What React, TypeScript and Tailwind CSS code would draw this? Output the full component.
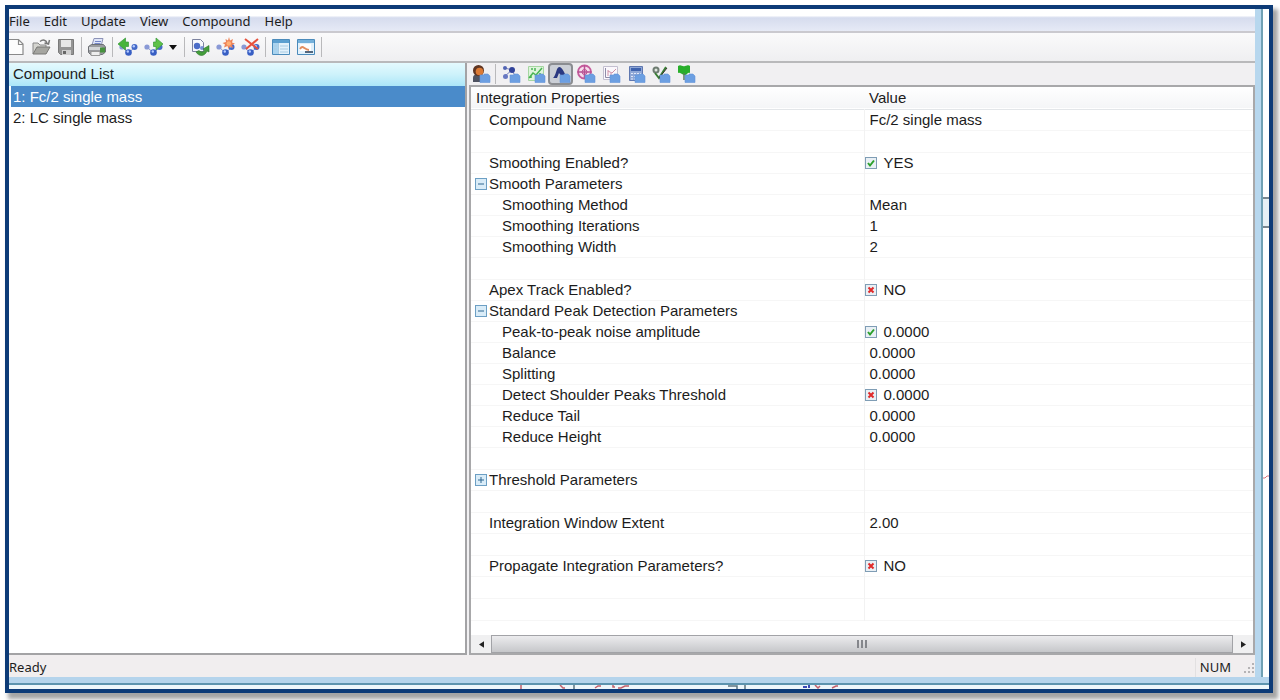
import React, { useState } from "react";

type Row = {
  id: string;
  label?: string;
  value?: string;
  level?: 1 | 2;
  check?: boolean;
  yesNo?: boolean;
  group?: string;
  parent?: string;
};

const MENUS = ["File", "Edit", "Update", "View", "Compound", "Help"];

const COMPOUNDS = ["1: Fc/2 single mass", "2: LC single mass"];

const ROWS: Row[] = [
  { id: "name", label: "Compound Name", value: "Fc/2 single mass", level: 1 },
  { id: "gap1" },
  { id: "smoothing", label: "Smoothing Enabled?", level: 1, check: true, yesNo: true },
  { id: "smooth", label: "Smooth Parameters", group: "smooth" },
  { id: "method", label: "Smoothing Method", value: "Mean", level: 2, parent: "smooth" },
  { id: "iterations", label: "Smoothing Iterations", value: "1", level: 2, parent: "smooth" },
  { id: "width", label: "Smoothing Width", value: "2", level: 2, parent: "smooth" },
  { id: "gap2" },
  { id: "apex", label: "Apex Track Enabled?", level: 1, check: false, yesNo: true },
  { id: "peak", label: "Standard Peak Detection Parameters", group: "peak" },
  { id: "noise", label: "Peak-to-peak noise amplitude", value: "0.0000", level: 2, check: true, parent: "peak" },
  { id: "balance", label: "Balance", value: "0.0000", level: 2, parent: "peak" },
  { id: "splitting", label: "Splitting", value: "0.0000", level: 2, parent: "peak" },
  { id: "shoulder", label: "Detect Shoulder Peaks Threshold", value: "0.0000", level: 2, check: false, parent: "peak" },
  { id: "tail", label: "Reduce Tail", value: "0.0000", level: 2, parent: "peak" },
  { id: "height", label: "Reduce Height", value: "0.0000", level: 2, parent: "peak" },
  { id: "gap3" },
  { id: "threshold", label: "Threshold Parameters", group: "threshold" },
  { id: "gap4" },
  { id: "extent", label: "Integration Window Extent", value: "2.00", level: 1 },
  { id: "gap5" },
  { id: "propagate", label: "Propagate Integration Parameters?", level: 1, check: false, yesNo: true },
  { id: "gap6" },
  { id: "gap7" },
];

function Svg({ children }: { children: React.ReactNode }) {
  return (
    <svg viewBox="0 0 20 20" className="h-5 w-5 shrink-0" fill="none" aria-hidden="true">
      {children}
    </svg>
  );
}

/* ---------- main toolbar icons ---------- */

function NewIcon() {
  return (
    <svg viewBox="0 0 16 20" className="h-5 w-4 shrink-0" fill="none" aria-hidden="true">
      <path d="M0 3h9l5 5v9H0" fill="#fdfdfd" />
      <path d="M0 2.5h9.500l4.500 4.500v10.500H0M9.500 2.500v5h4.500" stroke="#8a8a8a" strokeWidth="1.200" />
    </svg>
  );
}

function OpenIcon() {
  return (
    <Svg>
      <path d="M2 17V6h5l2 2h6v3" fill="#d5d5d0" stroke="#888" />
      <path d="M2 17l4-7h13l-4 7z" fill="#a5a5a0" stroke="#777774" />
      <path d="M9 4.500c3-2.500 6-1.500 7 1.500M18.500 3L17.500 7l-4-1" stroke="#777" strokeWidth="1.500" />
    </Svg>
  );
}

function SaveIcon() {
  return (
    <Svg>
      <path d="M2.500 2.500h15v15H4.500l-2-2z" fill="#949494" stroke="#7a7a7a" />
      <path d="M5 3h10v7H5z" fill="#e6e6e6" />
      <path d="M6 13h9v5H6z" fill="#cfcfcf" />
      <path d="M7 14h3v3H7z" fill="#666" />
    </Svg>
  );
}

function PrintIcon() {
  return (
    <Svg>
      <path d="M7 1.500h9l-2 8H4.500z" fill="#dfe5f8" stroke="#8d93b8" />
      <path d="M8 4.500h6M7.500 6.500h6" stroke="#7486c8" />
      <path d="M1.500 9.500l3-2h12l2 2.500v5l-3 2.500h-12l-2-2z" fill="#9a9ca0" stroke="#6d7075" />
      <path d="M2 10h12.500v3H2z" fill="#d3d5d8" />
      <path d="M4 14.500h9v4H4z" fill="#eee" stroke="#999" />
      <path d="M13 10.500h5v5h-5z" fill="#47923e" />
    </Svg>
  );
}

function Balls() {
  return (
    <>
      <path d="M4 10l6.500 6M10.500 16L17 10" stroke="#8795c8" />
      <circle cx="4" cy="10" r="2.600" fill="#8999d6" />
      <circle cx="10.500" cy="15.500" r="3.300" fill="#385fc4" />
      <circle cx="16.500" cy="10" r="3" fill="#4469c8" />
      <circle cx="9.800" cy="14.500" r="1.200" fill="#b5cbff" />
      <circle cx="15.800" cy="9.200" r="1.200" fill="#b5cbff" />
    </>
  );
}

function PreviousIcon() {
  return (
    <Svg>
      <Balls />
      <path d="M0 7l7.500-6v4h3v4.500h-3V13z" fill="#47b43c" stroke="#36993a" strokeWidth=".7" />
    </Svg>
  );
}

function NextIcon() {
  return (
    <Svg>
      <Balls />
      <path d="M20 7l-7-6v4h-2.500v4.500H13V13z" fill="#5fc148" stroke="#36993a" strokeWidth=".7" />
    </Svg>
  );
}

function RefreshIcon() {
  return (
    <Svg>
      <path d="M2.500 2.500h8l3 3v9h-11z" fill="#f7f8fd" stroke="#7d83a0" />
      <circle cx="7" cy="9" r="3.200" fill="#4b6cc8" />
      <circle cx="12" cy="11" r="2" fill="#7790d6" />
      <path d="M6 15c3 5 9 4.500 11-1l2 1V8.500l-6 3.500 2 1c-2 2.500-4 2.500-6 .5z" fill="#449e3b" stroke="#2a7528" strokeWidth=".6" />
    </Svg>
  );
}

function AddIcon() {
  return (
    <Svg>
      <Balls />
      <path d="M14 0l1 3.500L18 2l-1 3.500 3 1-3 1.500 1 3-3-1.500-1.500 2.500-1-3L9 10.500l1-3L7.500 6 11 5l-.5-3 2.500 1.500z" fill="#ee8458" />
      <circle cx="13.800" cy="6.500" r="2.300" fill="#ffb176" />
    </Svg>
  );
}

function DeleteIcon() {
  return (
    <Svg>
      <Balls />
      <path d="M5 2l13 10M18 2L6 12" stroke="#e6513c" strokeWidth="2" />
    </Svg>
  );
}

function WindowIcon() {
  return (
    <Svg>
      <path d="M1.500 2.500h17v15h-17z" fill="#e2f1fb" stroke="#4b8bbb" />
      <path d="M2 3h16v3H2z" fill="#5b9fd0" />
      <path d="M2 6h5v11H2z" fill="#a9d3ef" />
      <path d="M7.500 6v11M3 9h3M3 12h3M9 9h8M9 12h8M9 15h8" stroke="#a9cbe2" />
    </Svg>
  );
}

function ChartWindowIcon() {
  return (
    <Svg>
      <path d="M1.500 2.500h17v15h-17z" fill="#e2f1fb" stroke="#4b8bbb" />
      <path d="M2 3h16v3H2z" fill="#75b1db" />
      <path d="M4 7h11v7H4z" fill="#fff" />
      <path d="M4 12c3-5 4 1 9 1" stroke="#e38e60" strokeWidth="1.800" />
      <path d="M9 14h8v2H9z" fill="#53677d" />
    </Svg>
  );
}

/* ---------- property page icons, each with a blue folder in the corner ---------- */

function Folder() {
  return <path d="M9 11h4v-1h4l2 2v6.500H9z" fill="#6c9fe2" stroke="#6594d8" strokeWidth=".6" />;
}

function UserPage() {
  return (
    <Svg>
      <path d="M2 18v-4c0-3 2-4 6-4s6 2 6 5v3z" fill="#4f5361" />
      <circle cx="7.500" cy="6.500" r="5.500" fill="#5f3522" />
      <circle cx="8.500" cy="7.500" r="3.800" fill="#dc7a35" />
      <Folder />
    </Svg>
  );
}

function MoleculePage() {
  return (
    <Svg>
      <path d="M4 4l7 2-7 6M11 6l3 6" stroke="#7782bb" />
      <circle cx="4" cy="4" r="2" fill="#5265b4" />
      <circle cx="11" cy="6" r="3" fill="#31439a" />
      <circle cx="4.500" cy="12.500" r="2.500" fill="#6878c2" />
      <Folder />
    </Svg>
  );
}

function SpectrumPage() {
  return (
    <Svg>
      <path d="M2.500 2.500h15v14h-15z" fill="#dff4dc" stroke="#a5d6a1" />
      <path d="M3 14l4-5 3 2 6-7M5 5h2M9 4v3M13 10h2M5 11v3" stroke="#49b454" strokeWidth="1.500" />
      <Folder />
    </Svg>
  );
}

function PeakPage() {
  return (
    <Svg>
      <path d="M2 14c3-2 3-10 6-11 4 0 5 7 9 11l-6-1-3-4-2 5z" fill="#2b3982" />
      <Folder />
    </Svg>
  );
}

function TargetPage() {
  return (
    <Svg>
      <circle cx="8.500" cy="8" r="6.500" fill="#f7dcec" stroke="#c65b9c" strokeWidth="1.800" />
      <circle cx="8.500" cy="8" r="2.500" stroke="#bd4e91" />
      <path d="M8.500 1v14M1.500 8h14" stroke="#b75193" strokeWidth="1.500" />
      <Folder />
    </Svg>
  );
}

function CurvePage() {
  return (
    <Svg>
      <path d="M2.500 2.500h14v13h-14z" fill="#faf7fc" stroke="#c3bfd0" />
      <path d="M4.500 4v9.500H15" stroke="#8f8ba8" />
      <path d="M7 12V6M10 12V9M7 7l4 2 4-4" stroke="#cf91a7" />
      <Folder />
    </Svg>
  );
}

function CalculatorPage() {
  return (
    <Svg>
      <path d="M3.500 2.500h13v14h-13z" fill="#8fa7d6" stroke="#5f77b0" />
      <path d="M5 4h10v3H5z" fill="#3f63ae" />
      <path d="M5 9.500h10M5 12.500h10M5 15h10" stroke="#e0e8fa" strokeDasharray="2 1" />
      <Folder />
    </Svg>
  );
}

function MethodPage() {
  return (
    <Svg>
      <circle cx="5" cy="6" r="3.500" fill="#6f7c72" />
      <circle cx="5" cy="6" r="1.500" fill="#dfe8e0" />
      <path d="M4 9l4 5L15 3" stroke="#397e35" strokeWidth="2" />
      <path d="M8 14l8-10" stroke="#332f26" />
      <Folder />
    </Svg>
  );
}

function FlagPage() {
  return (
    <Svg>
      <path d="M2 2c3-2 4 1 7 0s4-1 5 0v7c-3-1-3 3-6 2s-4-3-6-2z" fill="#28ae2b" />
      <path d="M8 9v7" stroke="#5b7b59" strokeWidth="1.500" />
      <Folder />
    </Svg>
  );
}

function Separator() {
  return (
    <div className="flex w-[6px] shrink-0 justify-center">
      <div className="h-5 w-px bg-[#b9b9bb]" />
    </div>
  );
}

function ToolButton({ label, active, children }: { label: string; active?: boolean; children: React.ReactNode }) {
  return (
    <button
      type="button"
      aria-label={label}
      aria-pressed={active}
      className={
        active
          ? "flex h-[22px] w-[25px] shrink-0 items-center justify-center rounded-sm border-2 border-[#8b8d91] bg-[#cbcfd6]"
          : "flex h-[22px] w-[25px] shrink-0 items-center justify-center"
      }
    >
      {children}
    </button>
  );
}

function CheckMark({ checked, label, onChange }: { checked: boolean; label: string; onChange: () => void }) {
  return (
    <span className="grid h-3 w-3 shrink-0">
      <input
        type="checkbox"
        aria-label={label}
        checked={checked}
        onChange={onChange}
        className="col-start-1 row-start-1 h-3 w-3 appearance-none border border-[#7f9db5] bg-[#e9f0f5]"
      />
      <svg viewBox="0 0 12 12" className="pointer-events-none col-start-1 row-start-1 h-3 w-3" fill="none">
        {checked ? (
          <path d="M3 6l2 2.500L9 3.500" stroke="#2ba02b" strokeWidth="2" />
        ) : (
          <path d="M3.500 3.500l5 5M8.500 3.500l-5 5" stroke="#e02a2a" strokeWidth="2" />
        )}
      </svg>
    </span>
  );
}

function Toggle({ open, label, onClick }: { open: boolean; label: string; onClick: () => void }) {
  return (
    <button
      type="button"
      aria-label={label}
      aria-expanded={open}
      onClick={onClick}
      className="h-3 w-3 shrink-0 border border-[#6c9fc4] bg-[#d9ecf8]"
    >
      <svg viewBox="0 0 10 10" className="h-[10px] w-[10px]" stroke="#2f6690">
        <path d={open ? "M2 5h6" : "M2 5h6M5 2v6"} />
      </svg>
    </button>
  );
}

function PropertyTable() {
  const [open, setOpen] = useState<Record<string, boolean>>({ smooth: true, peak: true, threshold: false });
  const [checks, setChecks] = useState<Record<string, boolean>>(() =>
    Object.fromEntries(ROWS.filter((r) => r.check !== undefined).map((r) => [r.id, !!r.check]))
  );

  return (
    <table className="w-full table-fixed border-collapse text-left text-[15px] leading-5">
      <colgroup>
        <col className="w-[393px]" />
        <col />
      </colgroup>
      <thead>
        <tr className="h-[22px] border-b border-[#e3e6e9] bg-linear-to-b from-white to-[#f4f5f7]">
          <th className="py-0 pl-[5px] font-normal">Integration Properties</th>
          <th className="py-0 pl-[5px] font-normal">Value</th>
        </tr>
      </thead>
      <tbody>
        {ROWS.filter((row) => !row.parent || open[row.parent]).map((row) => (
          <tr key={row.id} className={row.label ? "h-[21px] border-b border-[#f6f6f6]" : "h-[22px] border-b border-[#f6f6f6]"}>
            <td className={row.level === 2 ? "border-r border-[#f2f2f2] py-0 pl-[31px]" : row.level === 1 ? "border-r border-[#f2f2f2] py-0 pl-[18px]" : "border-r border-[#f2f2f2] py-0 pl-1"}>
              <div className="flex items-center gap-[2px]">
                {row.group && (
                  <Toggle
                    open={open[row.group]}
                    label={row.label!}
                    onClick={() => setOpen({ ...open, [row.group!]: !open[row.group!] })}
                  />
                )}
                {row.label}
              </div>
            </td>
            <td className={row.check === undefined ? "py-0 pl-[5px]" : "py-0 pl-0"}>
              <div className="flex items-center gap-[7px]">
                {row.check !== undefined && (
                  <CheckMark
                    checked={checks[row.id]}
                    label={row.label!}
                    onChange={() => setChecks({ ...checks, [row.id]: !checks[row.id] })}
                  />
                )}
                {row.yesNo ? (checks[row.id] ? "YES" : "NO") : row.value}
              </div>
            </td>
          </tr>
        ))}
      </tbody>
    </table>
  );
}

function ScrollBar() {
  return (
    <div className="flex h-[18px] shrink-0 bg-[#f0f0f1]">
      <button type="button" aria-label="Scroll left" className="flex w-5 items-center justify-center">
        <svg viewBox="0 0 6 8" className="h-[7px] w-[5px]">
          <path d="M6 0v8L0 4z" fill="#222" />
        </svg>
      </button>
      <div className="flex flex-1 items-center justify-center gap-[2px] border border-[#a2a3a7] bg-linear-to-b from-[#ececee] to-[#c6c7ca]">
        <span className="h-2 w-[2px] bg-[#85878c]" />
        <span className="h-2 w-[2px] bg-[#85878c]" />
        <span className="h-2 w-[2px] bg-[#85878c]" />
      </div>
      <button type="button" aria-label="Scroll right" className="flex w-5 items-center justify-center">
        <svg viewBox="0 0 6 8" className="h-[7px] w-[5px]">
          <path d="M0 0v8l6-4z" fill="#222" />
        </svg>
      </button>
    </div>
  );
}

function App() {
  const [selected, setSelected] = useState(0);

  return (
    <div className="flex h-screen overflow-hidden bg-white pt-[5px] pr-[7px] pb-[7px] pl-[5px] font-['Liberation_Sans',Arial,sans-serif] text-[#1c1c1c]">
      <div className="flex min-w-0 flex-1 flex-col overflow-hidden border-4 border-[#0d3b77] bg-white shadow-[4px_5px_4px_1px_#a5a5a5]">
        <div className="flex min-h-0 flex-1">
          <div className="flex min-w-0 flex-1 flex-col bg-[#f1f0f2]">
            <nav className="flex h-6 shrink-0 items-center gap-[14px] border-b-2 border-[#cac9cf] bg-linear-to-b from-white from-30% via-[#d6dcee] via-40% to-[#e6eaf6] pt-[3px] font-['Noto_Sans',sans-serif] text-[13px]">
              {MENUS.map((menu) => (
                <button key={menu} type="button">
                  {menu}
                </button>
              ))}
            </nav>

            <div className="flex h-[30px] shrink-0 items-center border-b-2 border-[#b9b9bb] bg-linear-to-b from-[#fafafb] to-[#efeff1]">
              <button type="button" aria-label="New" className="w-[19px] shrink-0">
                <NewIcon />
              </button>
              <ToolButton label="Open"><OpenIcon /></ToolButton>
              <ToolButton label="Save"><SaveIcon /></ToolButton>
              <Separator />
              <ToolButton label="Print"><PrintIcon /></ToolButton>
              <Separator />
              <ToolButton label="Previous compound"><PreviousIcon /></ToolButton>
              <ToolButton label="Next compound"><NextIcon /></ToolButton>
              <button type="button" aria-label="More compounds" className="flex w-4 shrink-0 justify-center">
                <svg viewBox="0 0 8 5" className="h-[5px] w-2">
                  <path d="M0 0h8L4 5z" fill="#111" />
                </svg>
              </button>
              <Separator />
              <ToolButton label="Update compound"><RefreshIcon /></ToolButton>
              <ToolButton label="Add compound"><AddIcon /></ToolButton>
              <ToolButton label="Delete compound"><DeleteIcon /></ToolButton>
              <Separator />
              <ToolButton label="Table view"><WindowIcon /></ToolButton>
              <ToolButton label="Chart view"><ChartWindowIcon /></ToolButton>
              <Separator />
            </div>

            <div className="flex min-h-0 flex-1">
              <section className="flex w-[458px] shrink-0 flex-col border-r-2 border-b-2 border-[#a3a3a5] bg-white text-[15px] leading-5">
                <h2 className="h-[23px] shrink-0 bg-linear-to-b from-[#e4fafe] via-[#cdf2fb] to-[#abe6f8] pt-px pl-1">
                  Compound List
                </h2>
                <ul className="pl-[2px]">
                  {COMPOUNDS.map((name, i) => (
                    <li key={name}>
                      <button
                        type="button"
                        onClick={() => setSelected(i)}
                        className={
                          i === selected
                            ? "block h-[21px] w-full bg-[#4a8bca] pl-[2px] text-left text-white"
                            : "block h-[21px] w-full pl-[2px] text-left"
                        }
                      >
                        {name}
                      </button>
                    </li>
                  ))}
                </ul>
              </section>

              <section className="ml-[2px] flex min-w-0 flex-1 flex-col">
                <div className="flex h-[22px] shrink-0 items-center">
                  <button type="button" aria-label="Compound" className="flex w-[23px] shrink-0 justify-center">
                    <UserPage />
                  </button>
                  <Separator />
                  <ToolButton label="Molecule"><MoleculePage /></ToolButton>
                  <ToolButton label="Spectrum"><SpectrumPage /></ToolButton>
                  <ToolButton label="Integration" active><PeakPage /></ToolButton>
                  <ToolButton label="Target"><TargetPage /></ToolButton>
                  <ToolButton label="Calibration"><CurvePage /></ToolButton>
                  <ToolButton label="Calculation"><CalculatorPage /></ToolButton>
                  <ToolButton label="Method"><MethodPage /></ToolButton>
                  <ToolButton label="Flags"><FlagPage /></ToolButton>
                </div>
                <div className="flex min-h-0 flex-1 flex-col border-2 border-[#a8a8aa] bg-white">
                  <div className="min-h-0 flex-1 overflow-hidden">
                    <PropertyTable />
                  </div>
                  <ScrollBar />
                </div>
              </section>
            </div>

            <footer className="flex h-[22px] shrink-0 items-center bg-[#f1eeef] pt-1 font-['Noto_Sans',sans-serif] text-[13px]">
              <span className="flex-1">Ready</span>
              <span className="border-l border-[#e2e0e1] pl-1">NUM</span>
              <svg viewBox="0 0 12 12" className="ml-3 h-3 w-3" fill="#b5b3b5">
                <path d="M9 1h2v2H9zM5 5h2v2H5zM9 5h2v2H9zM1 9h2v2H1zM5 9h2v2H5zM9 9h2v2H9z" />
              </svg>
            </footer>
          </div>

          {/* window frame, right edge */}
          <div className="w-2 shrink-0 border-r-2 border-[#6fa0b4] bg-[#b7d7ee]" />
          <div className="flex w-[6px] shrink-0 flex-col bg-[#fdfeff] pt-[188px]">
            <div className="h-[31px] border-y-2 border-[#78868f] bg-[#e6f0f5]" />
            <svg viewBox="0 0 6 6" className="mt-[246px] h-[6px] w-[6px]" fill="none">
              <path d="M0 4h2l2-2h2" stroke="#d8737c" />
            </svg>
          </div>
        </div>

        {/* window frame, bottom edge with the traces behind it */}
        <div className="h-2 shrink-0 border-b-2 border-[#5c93ae] bg-[#b5d4ec]" />
        <svg className="h-1 w-full shrink-0 bg-[#edf6fb]" fill="none" aria-hidden="true">
          <path d="M512 0v4M551 0l3 3h2M586 3l3-2h3M604 0v2h2M609 3h3l4-2h4M806 0l3 3 2-2M823 3l4-2h2" stroke="#c4606b" strokeWidth="1.500" />
          <path d="M565 0v4M719 1h9v3M736 0v4" stroke="#5c7581" strokeWidth="1.500" />
          <path d="M794 2h4M800 0v3" stroke="#3b49b6" strokeWidth="2" />
        </svg>
      </div>
    </div>
  );
}

export default App;
